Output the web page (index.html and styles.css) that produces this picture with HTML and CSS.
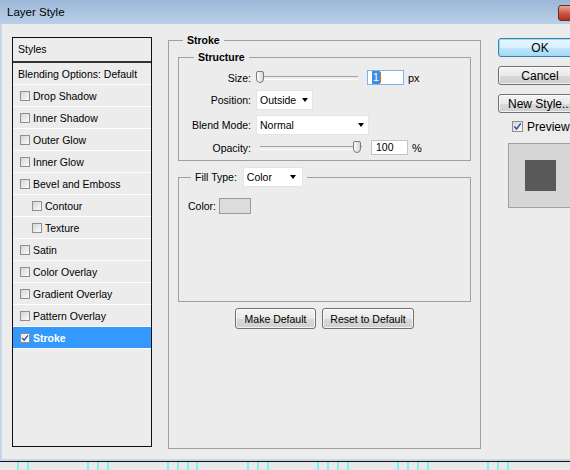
FILE: index.html
```html
<!DOCTYPE html>
<html lang="en">
<head>
  <meta charset="UTF-8" />
  <title>Layer Style</title>
  <link rel="stylesheet" href="styles.css">
</head>
<body>
  <div class="window">
    <div class="titlebar">
      <span class="title">Layer Style</span>
      <span class="close"></span>
    </div>

    <div class="dialog">
      <div class="styles-list">
        <div class="list-head">Styles</div>
        <div class="style-item plain">Blending Options: Default</div>
        <div class="style-item"><span class="cb"></span>Drop Shadow</div>
        <div class="style-item"><span class="cb"></span>Inner Shadow</div>
        <div class="style-item"><span class="cb"></span>Outer Glow</div>
        <div class="style-item"><span class="cb"></span>Inner Glow</div>
        <div class="style-item"><span class="cb"></span>Bevel and Emboss</div>
        <div class="style-item sub"><span class="cb"></span>Contour</div>
        <div class="style-item sub"><span class="cb"></span>Texture</div>
        <div class="style-item"><span class="cb"></span>Satin</div>
        <div class="style-item"><span class="cb"></span>Color Overlay</div>
        <div class="style-item"><span class="cb"></span>Gradient Overlay</div>
        <div class="style-item"><span class="cb"></span>Pattern Overlay</div>
        <div class="style-item active">
          <span class="cb"><svg viewBox="0 0 10 10"><path d="M1.5 5 L4 7.8 L8.6 1.6" fill="none" stroke="#2d4f9e" stroke-width="1.6"/></svg></span>Stroke
        </div>
      </div>

      <fieldset class="stroke-group">
        <legend>Stroke</legend>

        <fieldset class="structure">
          <legend>Structure</legend>
          <div class="struct">
            <label>Size:</label>
            <div class="ctrl">
              <div class="slider"><span class="thumb"></span></div>
              <div class="num focus"><span class="hl">1</span><span class="caret"></span></div>
              <span class="unit">px</span>
            </div>

            <label>Position:</label>
            <div class="ctrl">
              <div class="dropdown pos">Outside<span class="arrow"></span></div>
            </div>

            <label>Blend Mode:</label>
            <div class="ctrl">
              <div class="dropdown blend">Normal<span class="arrow"></span></div>
            </div>

            <label>Opacity:</label>
            <div class="ctrl">
              <div class="slider long"><span class="thumb end"></span></div>
              <div class="num">100</div>
              <span class="unit">%</span>
            </div>
          </div>
        </fieldset>

        <fieldset class="fill">
          <legend>Fill Type: <span class="dropdown color-sel">Color<span class="arrow"></span></span></legend>
          <div class="color-row">Color: <span class="swatch"></span></div>
        </fieldset>

        <div class="defaults">
          <button class="btn make">Make Default</button>
          <button class="btn reset">Reset to Default</button>
        </div>
      </fieldset>

      <div class="actions">
        <button class="btn big ok">OK</button>
        <button class="btn big">Cancel</button>
        <button class="btn big">New Style...</button>
        <div class="preview-check">
          <span class="cb on"><svg viewBox="0 0 10 10"><path d="M1.5 5 L4 7.8 L8.6 1.6" fill="none" stroke="#2d4f9e" stroke-width="1.6"/></svg></span>Preview
        </div>
        <div class="preview-box"><div class="swatch-dark"></div></div>
      </div>
    </div>

    <div class="frame-line"></div>
    <div class="ruler">
      <span class="tick" style="left:17px"></span><span class="tick" style="left:27px"></span>
      <span class="tick" style="left:87px"></span><span class="tick" style="left:97px"></span><span class="tick" style="left:107px"></span>
      <span class="tick" style="left:167px"></span><span class="tick" style="left:177px"></span><span class="tick" style="left:187px"></span><span class="tick" style="left:196px"></span>
      <span class="tick" style="left:247px"></span><span class="tick" style="left:257px"></span><span class="tick" style="left:267px"></span>
      <span class="tick" style="left:317px"></span><span class="tick" style="left:327px"></span><span class="tick" style="left:337px"></span><span class="tick" style="left:347px"></span>
      <span class="tick" style="left:397px"></span><span class="tick" style="left:407px"></span><span class="tick" style="left:417px"></span><span class="tick" style="left:427px"></span>
      <span class="tick" style="left:487px"></span><span class="tick" style="left:497px"></span><span class="tick" style="left:507px"></span>
    </div>
  </div>
</body>
</html>
```

FILE: styles.css
```css
* { box-sizing: border-box; }
body {
  margin: 0;
  width: 570px;
  height: 470px;
  overflow: hidden;
  font-family: "Liberation Sans", Arial, sans-serif;
  font-size: 10.5px;
  color: #000;
  background: #ececec;
}
.window {
  width: 570px;
  height: 470px;
  display: flex;
  flex-direction: column;
}
.titlebar {
  position: relative;
  flex: none;
  height: 24px;
  display: flex;
  align-items: center;
  padding-left: 7px;
  font-size: 11.5px;
  background: linear-gradient(#9bb7d7, #bad0e8);
}
.close {
  position: absolute;
  left: 558px;
  top: 5px;
  width: 44px;
  height: 16px;
  border: 1px solid #6b2a20;
  border-radius: 3px;
  background: linear-gradient(#eaa99a, #cc5a45 50%, #b0301c);
}
.dialog {
  flex: none;
  height: 437px;
  display: flex;
  align-items: flex-start;
  border-left: 2px solid #c6d7eb;
  border-bottom: 2px solid #c6d7eb;
}
.dialog > * { flex: none; }
.frame-line { height: 1px; background: #111; flex: none; }
.ruler {
  position: relative;
  flex: 1;
  background: #e9e9e9;
}
.tick {
  position: absolute;
  top: 0;
  bottom: 0;
  width: 2px;
  background: #7ff3f3;
}

/* styles list */
.styles-list {
  margin: 13px 0 0 10px;
  width: 140px;
  height: 410px;
  border: 1px solid #111;
}
.list-head {
  height: 25px;
  line-height: 22px;
  padding-left: 5px;
  border-bottom: 2px solid #333;
}
.style-item {
  height: 22px;
  display: flex;
  align-items: center;
  gap: 3px;
  padding-left: 7px;
  border-bottom: 1px solid #fff;
}
.style-item.plain { padding-left: 5px; }
.style-item.sub { padding-left: 19px; }
.style-item.active {
  background: #3399ff;
  color: #fff;
  font-weight: bold;
}
.cb {
  display: inline-flex;
  width: 10px;
  height: 10px;
  border: 1px solid #8e8f8f;
  background: linear-gradient(135deg, #d6d6d6, #fbfbfb);
}
.cb svg { width: 100%; height: 100%; }
.active .cb { background: linear-gradient(135deg, #e8e8e8, #fff); }

/* stroke group */
fieldset {
  margin: 0;
  border: 1px solid #a0a0a0;
  min-width: 0;
}
legend { padding: 0 4px; line-height: 13px; }
.stroke-group {
  margin: 10px 0 0 16px;
  width: 313px;
  height: 415px;
  padding: 4px 9px 0;
}
.stroke-group > legend { margin-left: 5px; font-weight: bold; }
.structure {
  height: 110px;
  padding: 0;
}
.structure > legend { margin-left: 15px; font-weight: bold; }
.struct {
  display: grid;
  grid-template-columns: 72px auto;
  grid-template-rows: 15px 20px 20px 15px;
  column-gap: 5px;
  row-gap: 5px;
  margin-top: 6px;
}
.struct label {
  text-align: right;
  align-self: center;
}
.ctrl {
  display: flex;
  align-items: center;
}
.slider {
  position: relative;
  width: 102px;
  height: 15px;
}
.slider.long { width: 106px; }
.slider::before {
  content: "";
  position: absolute;
  left: 4px;
  right: 0;
  top: 6px;
  height: 2px;
  border-top: 1px solid #a4a4a4;
  border-bottom: 1px solid #fff;
}
.thumb {
  position: absolute;
  left: 0;
  top: 1px;
  width: 8px;
  height: 12px;
  border: 1px solid #7b7b7b;
  border-radius: 2px 2px 4px 4px;
  background: linear-gradient(90deg, #fff, #d4d4d4);
}
.thumb.end { left: 97px; }
.num {
  width: 37px;
  height: 15px;
  margin-left: 9px;
  padding-left: 4px;
  line-height: 13px;
  border: 1px solid #c4c4c4;
  background: #fff;
}
.num.focus {
  display: flex;
  align-items: center;
  border-color: #7eb4ea;
}
.hl {
  background: #3d8ee6;
  color: #fff;
  padding: 0 1px;
}
.caret { width: 1px; height: 11px; background: #e07020; }
.unit { margin-left: 4px; font-size: 11px; }
.dropdown {
  display: flex;
  align-items: center;
  justify-content: space-between;
  flex: none;
  height: 20px;
  padding: 0 4px 0 3px;
  background: #fff;
  border: 1px solid #e4e4e4;
  font-size: 10.5px;
  font-weight: normal;
}
.dropdown.pos { width: 57px; }
.dropdown.blend { width: 113px; }
.arrow {
  width: 0;
  height: 0;
  border-left: 3.5px solid transparent;
  border-right: 3.5px solid transparent;
  border-top: 4px solid #000;
}

/* fill */
.fill {
  height: 135px;
  margin-top: 6px;
  padding: 0 9px;
}
.fill > legend {
  display: flex;
  align-items: center;
  gap: 6px;
  margin-left: 3px;
}
.color-sel { width: 60px; padding-right: 6px; }
.color-row {
  display: flex;
  align-items: center;
  gap: 3px;
  margin-top: 11px;
}
.swatch {
  width: 32px;
  height: 16px;
  border: 1px solid #9a9a9a;
  background: #dcdcdc;
}

/* buttons */
.btn {
  font-family: inherit;
  font-size: 10.5px;
  color: #000;
  padding: 0;
  border: 1px solid #707070;
  border-radius: 3px;
  background: linear-gradient(#f4f4f4, #e9e9e9 50%, #d9d9d9 51%, #cfcfcf);
  box-shadow: inset 0 0 0 1px rgba(255,255,255,0.7);
}
.defaults {
  display: flex;
  justify-content: center;
  gap: 6px;
  margin-top: 6px;
}
.make { width: 81px; height: 21px; }
.reset { width: 92px; height: 21px; }

.actions {
  display: flex;
  flex-direction: column;
  gap: 9px;
  margin: 14px 0 0 17px;
  width: 84px;
}
.btn.big {
  width: 84px;
  height: 19px;
  font-size: 12px;
}
.btn.ok {
  border-color: #3c7fb1;
  box-shadow: inset 0 0 0 1px #98dcf6;
  background: linear-gradient(#eaf6fd, #d9f0fc 50%, #bee6fd 51%, #a7d9f5);
}
.preview-check {
  display: flex;
  align-items: center;
  gap: 4px;
  margin: -1px 0 0 14px;
  font-size: 12px;
  height: 11px;
}
.preview-check .cb { width: 11px; height: 11px; }
.preview-box {
  margin: 2px 0 0 10px;
  width: 74px;
  height: 65px;
  padding: 16px 0 0 16px;
  border: 1px solid #a0a0a0;
  background: #d6d6d6;
}
.swatch-dark {
  width: 31px;
  height: 31px;
  background: #595959;
}
```
